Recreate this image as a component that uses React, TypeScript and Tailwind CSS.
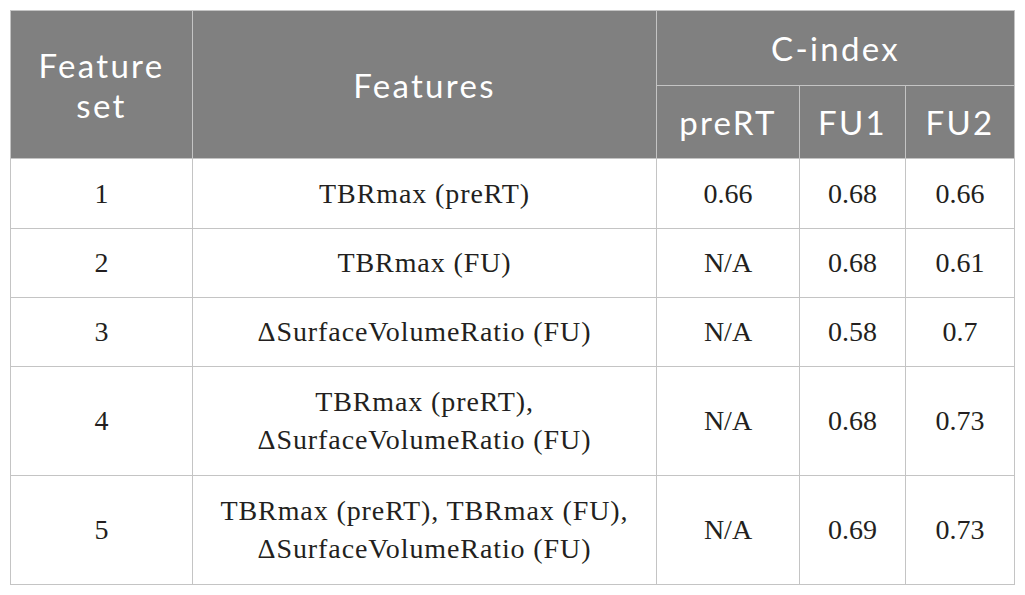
import React from "react";

const rows: { n: string; f: string[]; a: string; b: string; c: string; h: string }[] = [
  { n: "1", f: ["TBRmax (preRT)"], a: "0.66", b: "0.68", c: "0.66", h: "h-[70px]" },
  { n: "2", f: ["TBRmax (FU)"], a: "N/A", b: "0.68", c: "0.61", h: "h-[69px]" },
  { n: "3", f: ["ΔSurfaceVolumeRatio (FU)"], a: "N/A", b: "0.58", c: "0.7", h: "h-[69px]" },
  { n: "4", f: ["TBRmax (preRT),", "ΔSurfaceVolumeRatio (FU)"], a: "N/A", b: "0.68", c: "0.73", h: "h-[109px]" },
  { n: "5", f: ["TBRmax (preRT), TBRmax (FU),", "ΔSurfaceVolumeRatio (FU)"], a: "N/A", b: "0.69", c: "0.73", h: "h-[109px]" },
];

export default function App() {
  const th = "border border-[#c4c4c4] bg-[#808080] text-white font-normal text-center align-middle text-[33px] leading-[40px] tracking-[0.07em] font-['Lato',sans-serif]";
  const td = "border border-[#c4c4c4] text-center align-middle text-[#231f20] text-[28px] leading-[38px] font-['Liberation_Serif',serif]";
  return (
    <div className="w-[1025px] h-[595px] bg-white pt-[10px] pl-[10px]">
      <table className="border-collapse table-fixed w-[1004px] border border-[#c4c4c4]">
        <colgroup>
          <col className="w-[182px]" />
          <col className="w-[464px]" />
          <col className="w-[143px]" />
          <col className="w-[106px]" />
          <col className="w-[109px]" />
        </colgroup>
        <thead>
          <tr className="h-[75px]">
            <th rowSpan={2} className={th}>Feature<br />set</th>
            <th rowSpan={2} className={th}>Features</th>
            <th colSpan={3} className={th}>C-index</th>
          </tr>
          <tr className="h-[73px]">
            <th className={th}>preRT</th>
            <th className={th}>FU1</th>
            <th className={th}>FU2</th>
          </tr>
        </thead>
        <tbody>
          {rows.map((r) => (
            <tr key={r.n} className={r.h}>
              <td className={td}>{r.n}</td>
              <td className={`${td} tracking-[0.9px]`}>
                {r.f.map((l, i) => (
                  <div key={i}>{l}</div>
                ))}
              </td>
              <td className={td}>{r.a}</td>
              <td className={td}>{r.b}</td>
              <td className={td}>{r.c}</td>
            </tr>
          ))}
        </tbody>
      </table>
    </div>
  );
}
